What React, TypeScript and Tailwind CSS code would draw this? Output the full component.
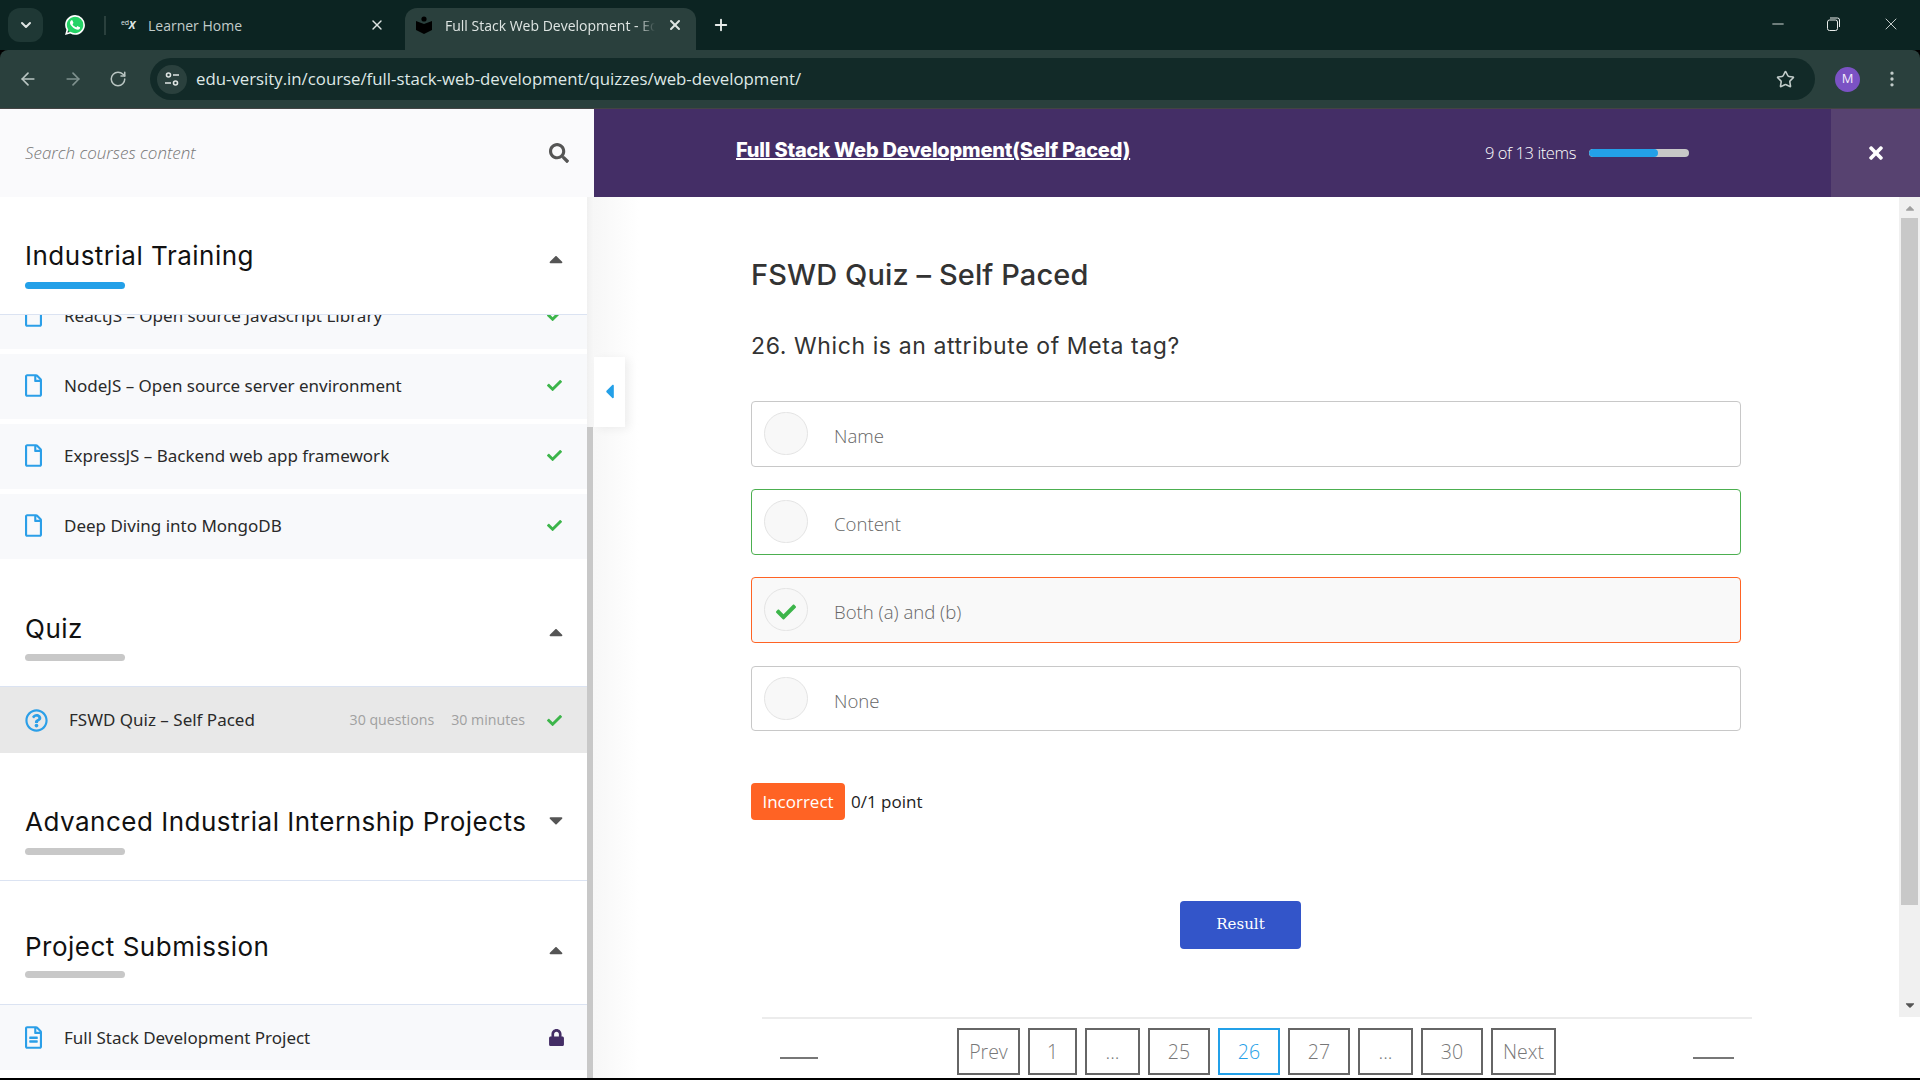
import { ChevronDown, X, Plus, ArrowLeft, ArrowRight, RotateCw, Star, EllipsisVertical, Minus } from 'lucide-react';
import { FaCheck, FaCaretUp, FaCaretDown, FaCaretLeft, FaRegFile, FaRegFileAlt, FaRegQuestionCircle, FaLock, FaSearch, FaTimes } from 'react-icons/fa';
import { SiWhatsapp } from 'react-icons/si';

const options = [
  { label: 'Name', box: 'h-[66px] border-[#c8c8c8] bg-white', checked: false },
  { label: 'Content', box: 'h-[66px] border-[#4caf50] bg-white', checked: false },
  { label: 'Both (a) and (b)', box: 'h-[66px] border-[#ff6324] bg-[#f9f9f9]', checked: true },
  { label: 'None', box: 'mt-px h-[65px] border-[#c8c8c8] bg-white', checked: false },
];

const pages = [
  { label: 'Prev', w: 'w-[63px]' },
  { label: '1', w: 'w-[49px]' },
  { label: '...', w: 'w-[55px]' },
  { label: '25', w: 'w-[62px]' },
  { label: '26', w: 'w-[62px]', active: true },
  { label: '27', w: 'w-[62px]' },
  { label: '...', w: 'w-[55px]' },
  { label: '30', w: 'w-[62px]' },
  { label: 'Next', w: 'w-[65px]' },
];

function SectionHead({ title, barColor = 'bg-[#c8c8c8]', down = false, className = '', barGap = 'mt-2', bottom = 'pb-[25px]' }: { title: string; barColor?: string; down?: boolean; className?: string; barGap?: string; bottom?: string }) {
  return (
    <div className={`${className} ${bottom} border-b border-[#dbe3f2] px-[25px] relative bg-white`}>
      <div className="flex items-center justify-between h-9">
        <h3 className="font-['Inter'] text-[26px] leading-9 text-[#111] tracking-[0.5px] whitespace-nowrap">{title}</h3>
        {down ? <FaCaretDown className="text-[#555] text-[22px] mr-[-5px] mt-[-4px]" /> : <FaCaretUp className="text-[#555] text-[22px] mr-[-5px] mt-[6px]" />}
      </div>
      <div className={`${barGap} h-[7px] w-[100px] rounded-full ${barColor}`} />
    </div>
  );
}

function LessonRow({ title }: { title: string }) {
  return (
    <div className="h-[65px] bg-[#f8f9fb] flex items-center pl-[25px] pr-[25px] pb-[2px]">
      <FaRegFile className="text-[#2b9fe8] text-[23px] w-[17px] shrink-0" />
      <span className="ml-[22px] font-['Noto_Sans'] text-[17px] text-[#2a2a2a] flex-1 whitespace-nowrap">{title}</span>
      <FaCheck className="text-[#3cb54a] text-[15px]" />
    </div>
  );
}

function BrowserChrome() {
  return (
    <>
      {/* tab strip */}
      <div className="h-[50px] bg-[#0c2422] flex items-start shrink-0 font-['Open_Sans'] text-[14px]">
        <div className="ml-2 mt-2 w-[35px] h-[34px] rounded-xl bg-[#1f3835] flex items-center justify-center">
          <ChevronDown size={16} strokeWidth={3} className="text-[#dfe5e3]" />
        </div>
        <div className="ml-[22px] mt-[15px] w-5 h-5 relative">
          <div className="absolute inset-[1px] rounded-full bg-[#25d366]" />
          <SiWhatsapp className="absolute inset-0 text-white text-[20px]" />
        </div>
        <div className="ml-[19px] mt-[16px] w-[2px] h-[19px] bg-[#2a403d]" />
        <div className="ml-[15px] mt-[8px] w-[284px] h-[34px] flex items-center text-[#c2ccca]">
          <span className="w-[27px] text-[11px] italic text-[#dfe5e3] tracking-tight whitespace-nowrap"><sup className="text-[7px] not-italic">ed</sup><b>X</b></span>
          <span>Learner Home</span>
          <X size={16} className="ml-auto mr-[20px] text-[#dfe5e3]" />
        </div>
        <div className="mt-2 w-[291px] h-[42px] rounded-t-xl bg-[#2a403d] flex items-center text-[#dfe5e3] pb-2">
          <svg width="18" height="18" viewBox="0 0 18 18" className="ml-[10px] shrink-0">
            <circle cx="9" cy="3" r="2.6" fill="#000" />
            <path d="M1 5 L9 8 L17 5 V14 L9 18 L1 14 Z" fill="#000" />
          </svg>
          <span className="ml-[12px] w-[210px] overflow-hidden whitespace-nowrap [mask-image:linear-gradient(90deg,#000_92%,transparent)]">Full Stack Web Development - Edu-versity</span>
          <X size={16} strokeWidth={3} className="ml-[12px] text-[#dfe5e3]" />
        </div>
        <Plus size={18} strokeWidth={2.5} className="ml-4 mt-4 text-[#e8ecea]" />
        <div className="ml-auto flex items-center text-[#e8ecea] mt-[14px]">
          <Minus size={18} strokeWidth={1.2} className="mr-[38px]" />
          <svg width="16" height="16" viewBox="0 0 16 16" fill="none" stroke="currentColor" strokeWidth="1" className="mr-[40px]">
            <rect x="2.5" y="4" width="10" height="10.5" rx="2" />
            <path d="M5 2 H12.5 A2 2 0 0 1 14.5 4 V11" />
          </svg>
          <X size={20} strokeWidth={1} className="mr-[19px]" />
        </div>
      </div>
      {/* toolbar */}
      <div className="h-[59px] bg-[#2a403d] rounded-t-lg border-b border-[#444] flex items-center shrink-0">
        <ArrowLeft size={20} className="ml-[18px] text-[#b9c5c2]" />
        <ArrowRight size={20} className="ml-[25px] text-[#7f918e]" />
        <RotateCw size={18} className="ml-[26px] text-[#b9c5c2]" />
        <div className="ml-[23px] w-[1665px] h-[42px] rounded-full bg-[#122a28] flex items-center">
          <div className="ml-[7px] w-[30px] h-[29px] rounded-full bg-[#2a403d] flex items-center justify-center">
            <svg width="16" height="16" viewBox="0 0 16 16" fill="none" stroke="#dfe5e3" strokeWidth="1.6">
              <circle cx="4.5" cy="4" r="2" />
              <path d="M9 4 H15 M1 12 H7" />
              <circle cx="11.5" cy="12" r="2" />
            </svg>
          </div>
          <span className="ml-[9px] font-['Open_Sans'] text-[16.8px] text-[#dfe8e6] whitespace-nowrap">edu-versity.in/course/full-stack-web-development/quizzes/web-development/</span>
          <Star size={19} className="ml-auto mr-[20px] text-[#c2ccca]" />
        </div>
        <div className="ml-[20px] w-[25px] h-[25px] rounded-full bg-[#7b52c4] text-[#f2ecfa] text-[13px] font-['Open_Sans'] flex items-center justify-center">M</div>
        <EllipsisVertical size={20} className="ml-[22px] text-[#c2ccca]" />
      </div>
    </>
  );
}

function Sidebar() {
  return (
    <aside className="w-[594px] shrink-0 flex flex-col relative z-10">
      <div className="h-[88px] bg-[#fafafc] flex items-center justify-between pl-[25px] pr-[25px] shrink-0">
        <span className="font-['Open_Sans'] italic font-light text-[17px] text-[#777]">Search courses content</span>
        <FaSearch className="text-[#555] text-[20px]" />
      </div>
      <div className="flex flex-1 min-h-0">
        <div className="w-[587px] bg-white overflow-hidden">
          <SectionHead title="Industrial Training" barColor="bg-[#23a0e8]" className="pt-[41px]" />
          <div className="flex flex-col gap-[5px]">
            <div className="h-[34px] overflow-hidden">
              <div className="-mt-[31px]"><LessonRow title="ReactJS – Open source Javascript Library" /></div>
            </div>
            <LessonRow title="NodeJS – Open source server environment" />
            <LessonRow title="ExpressJS – Backend web app framework" />
            <LessonRow title="Deep Diving into MongoDB" />
          </div>
          <SectionHead title="Quiz" className="pt-[52px]" barGap="mt-[7px]" bottom="pb-[25px]" />
          <div className="h-[66px] bg-[#e8e8e8] flex items-center px-[25px]">
            <FaRegQuestionCircle className="text-[#2b9fe8] text-[23px] shrink-0" />
            <span className="ml-[21px] font-['Noto_Sans'] text-[17px] text-[#2a2a2a] flex-1 whitespace-nowrap">FSWD Quiz – Self Paced</span>
            <span className="font-['Open_Sans'] text-[14.2px] text-[#a0a0a0]">30 questions</span>
            <span className="ml-[17px] font-['Open_Sans'] text-[14.2px] text-[#a0a0a0]">30 minutes</span>
            <FaCheck className="ml-[22px] text-[#3cb54a] text-[15px]" />
          </div>
          <SectionHead title="Advanced Industrial Internship Projects" down className="pt-[51px]" />
          <SectionHead title="Project Submission" className="pt-[48px]" barGap="mt-[6px]" bottom="pb-[26px]" />
          <div className="h-[65px] bg-[#f8f9fb] flex items-center px-[25px]">
            <FaRegFileAlt className="text-[#2b9fe8] text-[23px] w-[17px] shrink-0" />
            <span className="ml-[22px] font-['Noto_Sans'] text-[17px] text-[#2a2a2a] flex-1 whitespace-nowrap">Full Stack Development Project</span>
            <FaLock className="text-[#442e66] text-[17px] mr-[-3px]" />
          </div>
        </div>
        <div className="w-[7px] bg-gradient-to-r from-[#f0f0f0] to-[#f8f8f8] flex flex-col">
          <div className="mt-[230px] flex-1 w-[6px] bg-[#c8c8c8]" />
        </div>
      </div>
      {/* collapse handle */}
      <button className="absolute left-[594px] top-[248px] w-[31px] h-[70px] bg-white shadow-[4px_2px_10px_rgba(0,0,0,0.06)] flex items-center justify-center">
        <FaCaretLeft className="text-[#23a0e8] text-[23px] -ml-[1px] -mt-[1px]" />
      </button>
    </aside>
  );
}

function Main() {
  return (
    <main className="flex-1 flex flex-col min-w-0 bg-white">
      <div className="h-[88px] bg-[#442e66] flex shrink-0 text-white">
        <a className="ml-[142px] mt-[21px] font-['Inter'] font-extrabold text-[20px] leading-[40px] h-[40px] underline whitespace-nowrap tracking-[-0.2px]">Full Stack Web Development(Self Paced)</a>
        <div className="ml-auto flex items-center">
          <span className="font-['Open_Sans'] font-light text-[16.5px] tracking-[-0.4px] mt-[1px]">9 of 13 items</span>
          <div className="ml-[13px] w-[100px] h-2 mt-[-1px] rounded bg-[#c8c8c8] overflow-hidden">
            <div className="h-full w-[69px] bg-[#23a0e8] rounded" />
          </div>
          <div className="ml-[142px] w-[89px] h-[88px] bg-[#574270] flex items-center justify-center">
            <FaTimes className="text-white text-[20px]" />
          </div>
        </div>
      </div>
      <div className="flex h-[820px] shrink-0">
        <div className="flex-1 pl-[157px] pt-[61px] bg-[linear-gradient(90deg,#f7f7f7,#ffffff_45px)]">
          <h2 className="font-['Inter'] font-medium text-[29px] leading-[34px] tracking-[0.1px] text-[#333] whitespace-nowrap">FSWD Quiz – Self Paced</h2>
          <p className="mt-[39px] font-['Inter'] text-[23px] leading-[30px] tracking-[0.6px] text-[#333] whitespace-nowrap">26. Which is an attribute of Meta tag?</p>
          <div className="mt-[40px] w-[990px] flex flex-col gap-[22px]">
            {options.map((o) => (
              <div key={o.label} className={`rounded border flex items-center pl-[12px] ${o.box}`}>
                <div className="w-[44px] h-[43px] rounded-full border border-[#e4e4e4] bg-[#f8f8f8] flex items-center justify-center mt-[-1px]">
                  {o.checked && <FaCheck className="text-[#3cb54a] text-[20px] mt-[5px]" />}
                </div>
                <span className="ml-[26px] font-['Open_Sans'] font-light text-[18.6px] text-[#666] mt-[4px]">{o.label}</span>
              </div>
            ))}
          </div>
          <div className="mt-[52px] flex items-center">
            <span className="w-[94px] h-[37px] rounded bg-[#ff6324] text-white font-['Open_Sans'] text-[17px] flex items-center justify-center">Incorrect</span>
            <span className="ml-[6px] font-['Open_Sans'] text-[17px] text-[#222]">0/1 point</span>
          </div>
          <button className="mt-[81px] ml-[429px] w-[121px] h-[48px] rounded bg-[#3355c9] text-white font-['DejaVu_Serif'] text-[15px] pb-[2px]">Result</button>
        </div>
        {/* page scrollbar */}
        <div className="w-[21px] bg-[#f0f0f0] flex flex-col items-center">
          <FaCaretUp className="text-[#a0a0a0] text-[14px] mt-[4px]" />
          <div className="mt-[3px] w-[17px] h-[687px] bg-[#c8c8c8]" />
          <FaCaretDown className="text-[#555] text-[14px] mt-auto mb-[5px]" />
        </div>
      </div>
      <div className="flex-1 relative bg-[linear-gradient(90deg,#f7f7f7,#ffffff_45px)]">
        <div className="ml-[168px] w-[990px] border-t-2 border-[#ececec] flex pt-[9px] font-['Open_Sans'] font-light text-[19.5px] text-[#777]">
          <div className="ml-[18px] mt-[29px] w-[38px] h-[2px] bg-[#777]" />
          <div className="ml-[139px] flex gap-[8px]">
            {pages.map((p, i) => (
              <span key={i} className={`${p.w} h-[47px] border-2 flex items-center justify-center ${p.active ? 'border-[#23a0e8] text-[#23a0e8]' : 'border-[#666]'}`}>{p.label}</span>
            ))}
          </div>
          <div className="ml-[137px] mt-[29px] w-[41px] h-[2px] bg-[#777]" />
        </div>
      </div>
    </main>
  );
}

export default function App() {
  return (
    <div className="w-[1920px] h-[1080px] flex flex-col overflow-hidden bg-black pb-[2px]">
      <BrowserChrome />
      <div className="flex flex-1 min-h-0 bg-white overflow-hidden">
        <Sidebar />
        <Main />
      </div>
    </div>
  );
}
